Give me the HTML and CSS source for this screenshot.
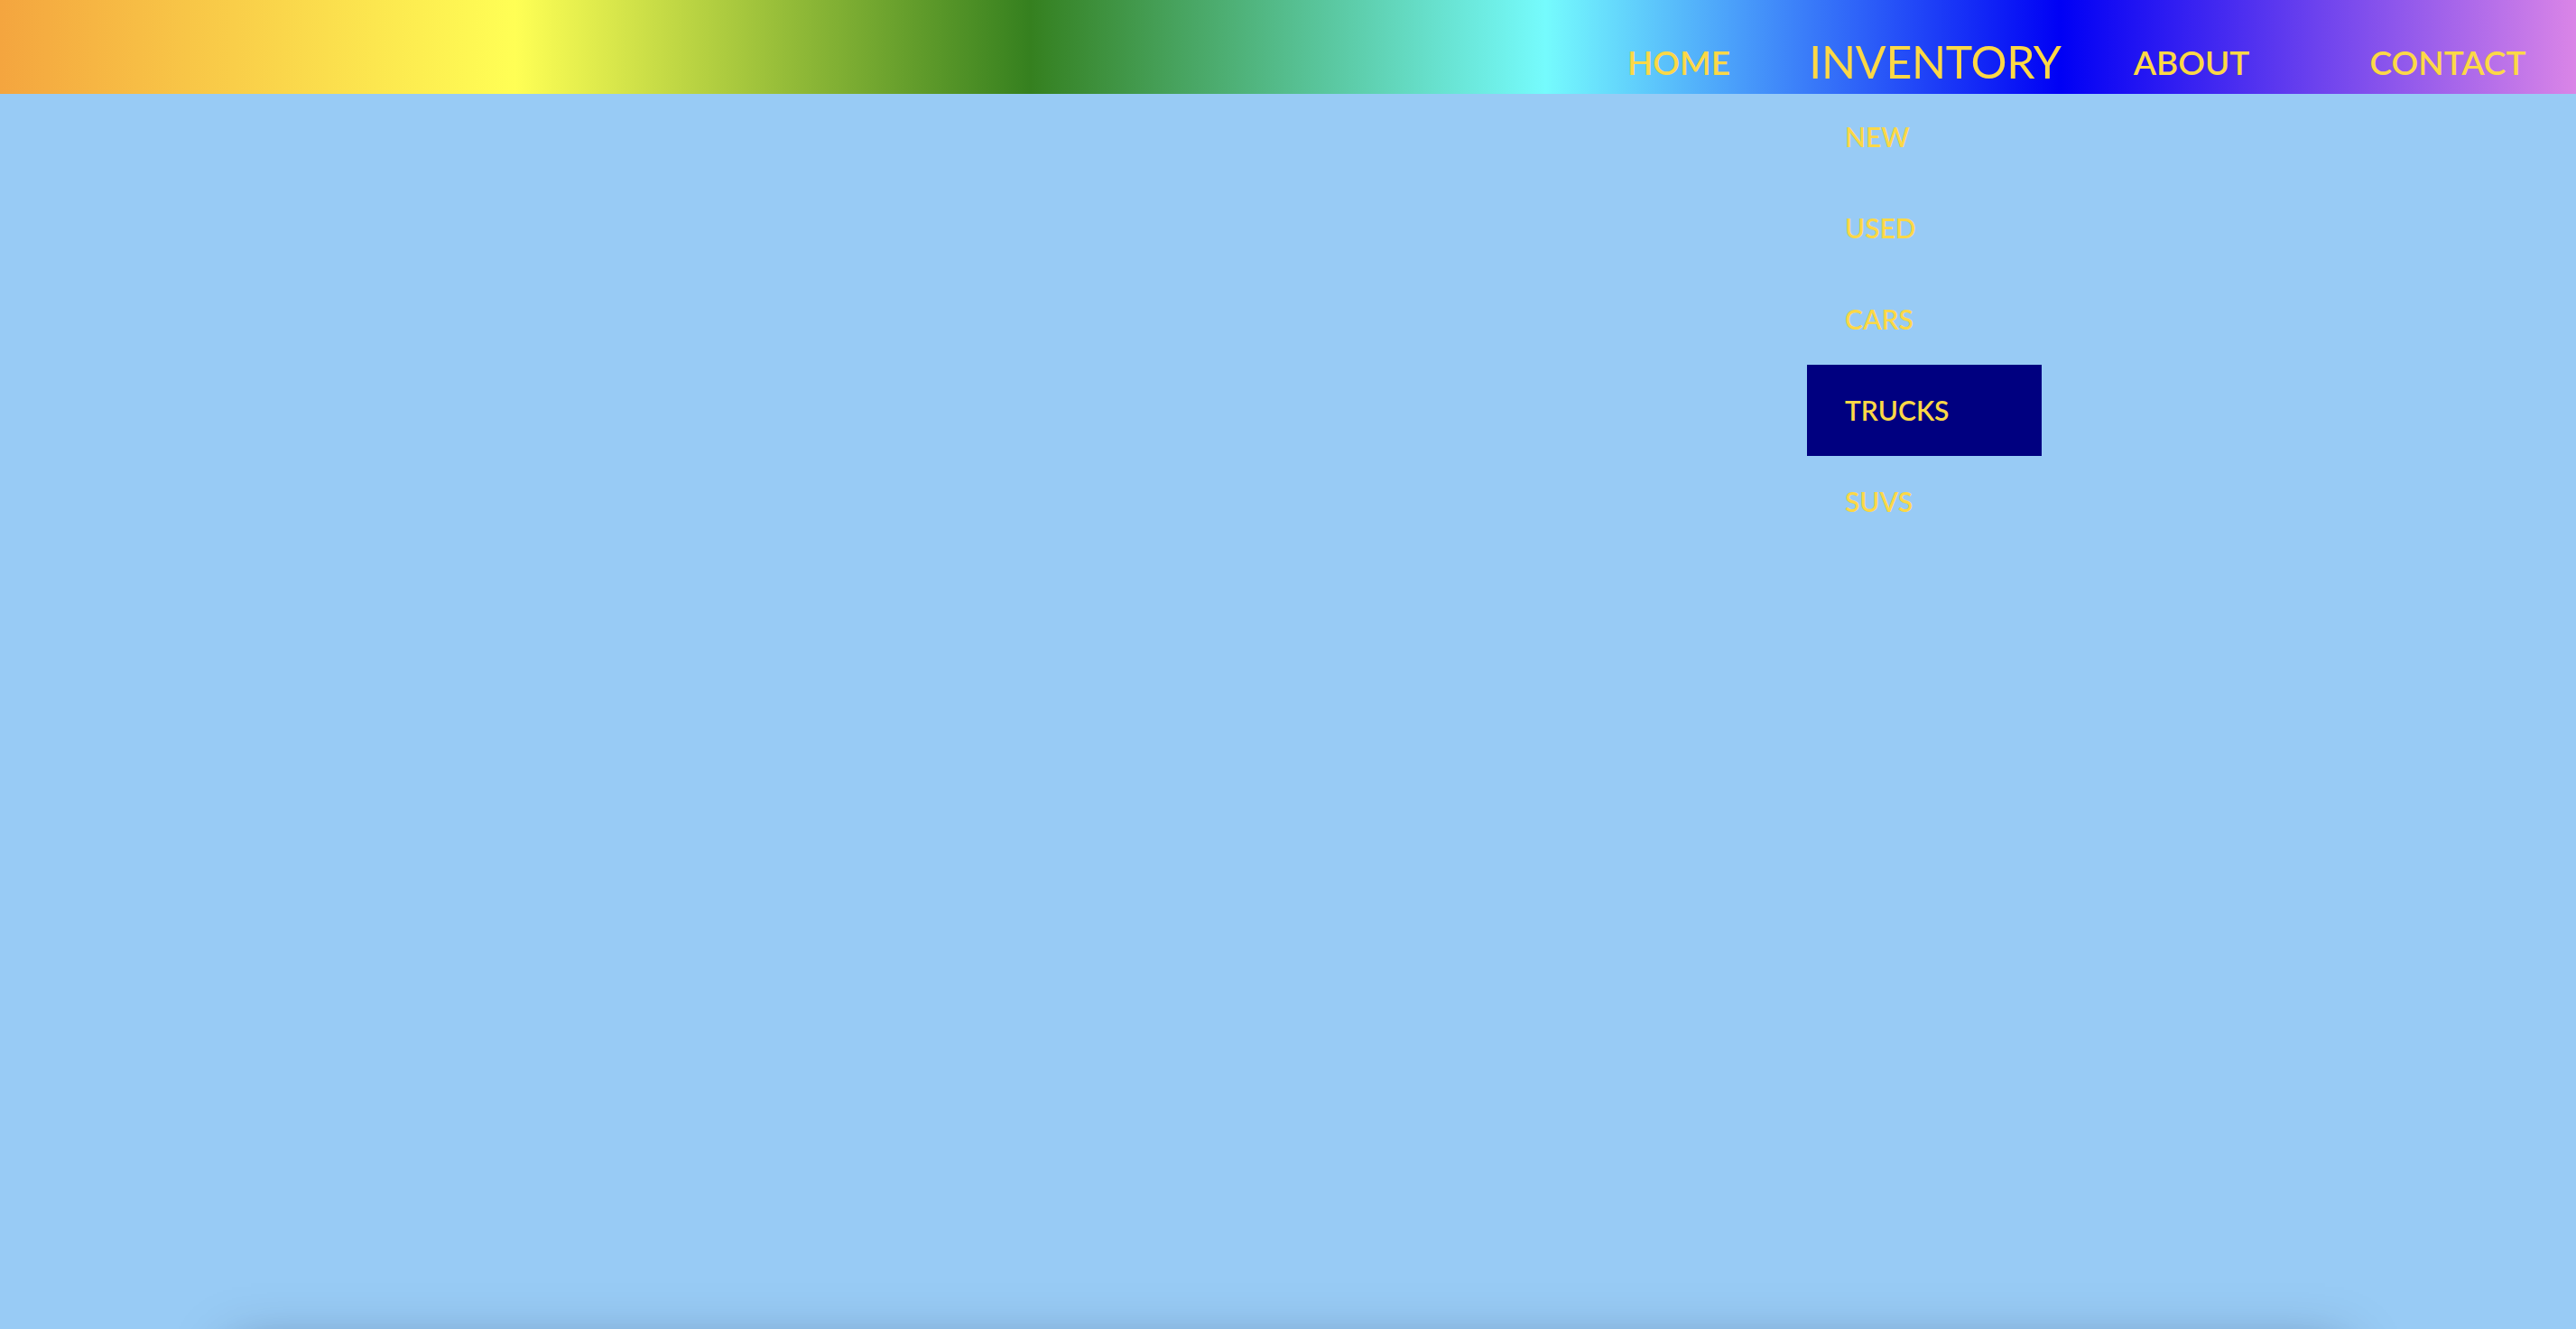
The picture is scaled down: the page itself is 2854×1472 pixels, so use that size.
FILE: index.html
```html
<!DOCTYPE html>
<html lang="en">
<head>
<meta charset="utf-8">
<title>Inventory</title>
<link rel="stylesheet" href="styles.css">
</head>
<body>
<header class="site-header">
  <nav class="main-nav">
    <ul class="nav-list">
      <li class="nav-item"><a class="nav-link" href="#">HOME</a></li>
      <li class="nav-item nav-item--open">
        <a class="nav-link nav-link--active" href="#">INVENTORY</a>
        <ul class="dropdown">
          <li><a class="dropdown-link" href="#">NEW</a></li>
          <li><a class="dropdown-link" href="#">USED</a></li>
          <li><a class="dropdown-link" href="#">CARS</a></li>
          <li><a class="dropdown-link dropdown-link--hover" href="#">TRUCKS</a></li>
          <li><a class="dropdown-link" href="#">SUVS</a></li>
        </ul>
      </li>
      <li class="nav-item"><a class="nav-link" href="#">ABOUT</a></li>
      <li class="nav-item"><a class="nav-link" href="#">CONTACT</a></li>
    </ul>
  </nav>
</header>
<main class="content">
  <section class="panel"></section>
</main>
</body>
</html>
```
FILE: styles.css
```css
html, body {
  margin: 0;
  padding: 0;
}

body {
  background: #98cbf5;
  font-family: Lato, "Open Sans", "DejaVu Sans", sans-serif;
  overflow: hidden;
}

.site-header {
  height: 104px;
  background: linear-gradient(to right,
    #f4a53f 0%,
    #ffff55 20%,
    #35801f 40%,
    #75fbfd 60%,
    #0000f5 80%,
    #da85e7 100%);
}

.main-nav {
  display: flex;
  justify-content: flex-end;
  height: 100%;
}

.nav-list {
  list-style: none;
  margin: 0;
  padding: 0;
  display: flex;
  height: 100%;
}

.nav-item {
  position: relative;
  width: 284px;
  display: flex;
  justify-content: center;
  align-items: flex-start;
  padding-top: 50px;
  box-sizing: border-box;
}

.nav-link {
  color: #fcd846;
  text-decoration: none;
  font-size: 37px;
  line-height: 1;
  font-weight: 600;
}

.nav-link--active {
  font-size: 50px;
  margin-top: -7px;
  font-weight: 400;
  letter-spacing: -0.3px;
}

.dropdown {
  position: absolute;
  top: 101px;
  left: 0;
  width: 260px;
  list-style: none;
  margin: 0;
  padding: 0;
  display: flex;
  flex-direction: column;
}

.dropdown-link {
  display: block;
  height: 101px;
  line-height: 101px;
  padding-left: 42px;
  color: #fcd846;
  text-decoration: none;
  font-size: 30px;
  font-weight: 600;
}

.dropdown-link--hover {
  background: #000080;
}

.content {
  display: flex;
  justify-content: center;
  padding-top: 1390px;
}

.panel {
  width: 2340px;
  height: 600px;
  background: #98cbf5;
  box-shadow: 0 0 60px rgba(0, 0, 40, 0.35);
}
```
